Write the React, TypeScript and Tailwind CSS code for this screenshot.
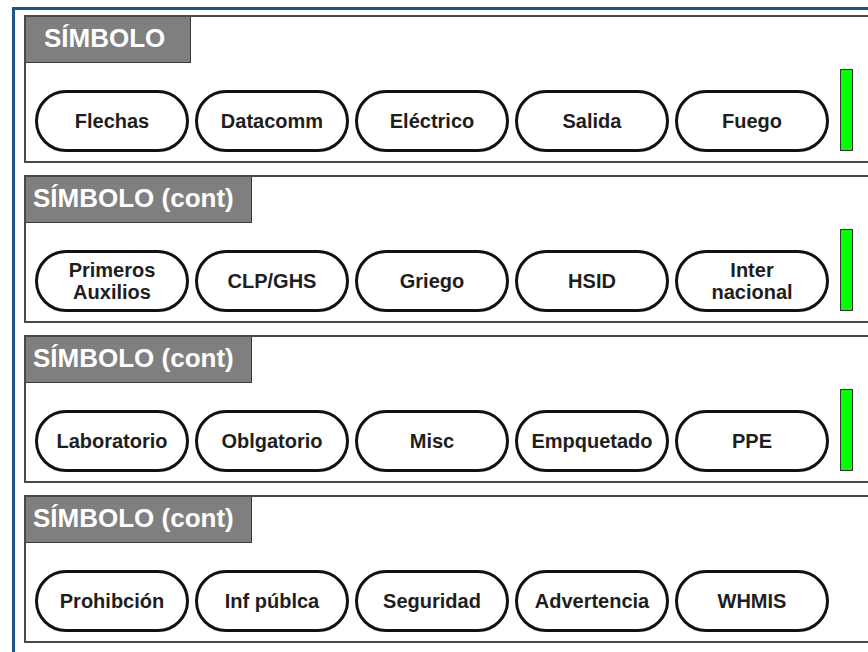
const panels: { title: string; headerW: string; pad: string; buttons: string[][]; bar: boolean }[] = [
  {
    title: "SÍMBOLO",
    headerW: "w-[165px]",
    pad: "pl-[18px]",
    buttons: [["Flechas"], ["Datacomm"], ["Eléctrico"], ["Salida"], ["Fuego"]],
    bar: true,
  },
  {
    title: "SÍMBOLO (cont)",
    headerW: "w-[226px]",
    pad: "pl-[7px]",
    buttons: [["Primeros", "Auxilios"], ["CLP/GHS"], ["Griego"], ["HSID"], ["Inter", "nacional"]],
    bar: true,
  },
  {
    title: "SÍMBOLO (cont)",
    headerW: "w-[226px]",
    pad: "pl-[7px]",
    buttons: [["Laboratorio"], ["Oblgatorio"], ["Misc"], ["Empquetado"], ["PPE"]],
    bar: true,
  },
  {
    title: "SÍMBOLO (cont)",
    headerW: "w-[226px]",
    pad: "pl-[7px]",
    buttons: [["Prohibción"], ["Inf públca"], ["Seguridad"], ["Advertencia"], ["WHMIS"]],
    bar: false,
  },
];

export default function App() {
  return (
    <div className="h-[652px] w-[868px] overflow-hidden bg-white pl-[12px] pt-[7px] font-['Liberation_Sans',Arial,sans-serif]">
      <div className="h-[700px] w-[900px] border-l-[3px] border-t-[3px] border-[#1c5688] pl-[9px] pt-[5px]">
        <div className="flex flex-col gap-[12px]">
          {panels.map((p, i) => (
            <Panel key={i} {...p} />
          ))}
        </div>
      </div>
    </div>
  );
}

function Panel({ title, headerW, pad, buttons, bar }: { title: string; headerW: string; pad: string; buttons: string[][]; bar: boolean }) {
  return (
    <div className="flex h-[148px] w-[880px] flex-col border-2 border-[#4a4a4a]">
      <div
        className={`flex h-[46px] shrink-0 items-center border-b border-r border-[#3a3a3a] bg-[#7f7f7f] pb-[4px] text-[26px] font-bold leading-none text-white ${headerW} ${pad}`}
      >
        {title}
      </div>
      <div className="mt-[6px] flex h-[83px] items-end gap-[6px] pl-[9px]">
        {buttons.map((lines, i) => (
          <Pill key={i} lines={lines} />
        ))}
        {bar && <div className="mb-[1px] ml-[5px] h-[82px] w-[13px] border border-[#333] bg-[#00ff00]" />}
      </div>
    </div>
  );
}

function Pill({ lines }: { lines: string[] }) {
  return (
    <div className="flex h-[62px] w-[154px] flex-col items-center justify-center rounded-full border-[3px] border-[#111] text-[20px] font-bold leading-[22px] text-[#1e1e1e]">
      {lines.map((l, i) => (
        <span key={i}>{l}</span>
      ))}
    </div>
  );
}
